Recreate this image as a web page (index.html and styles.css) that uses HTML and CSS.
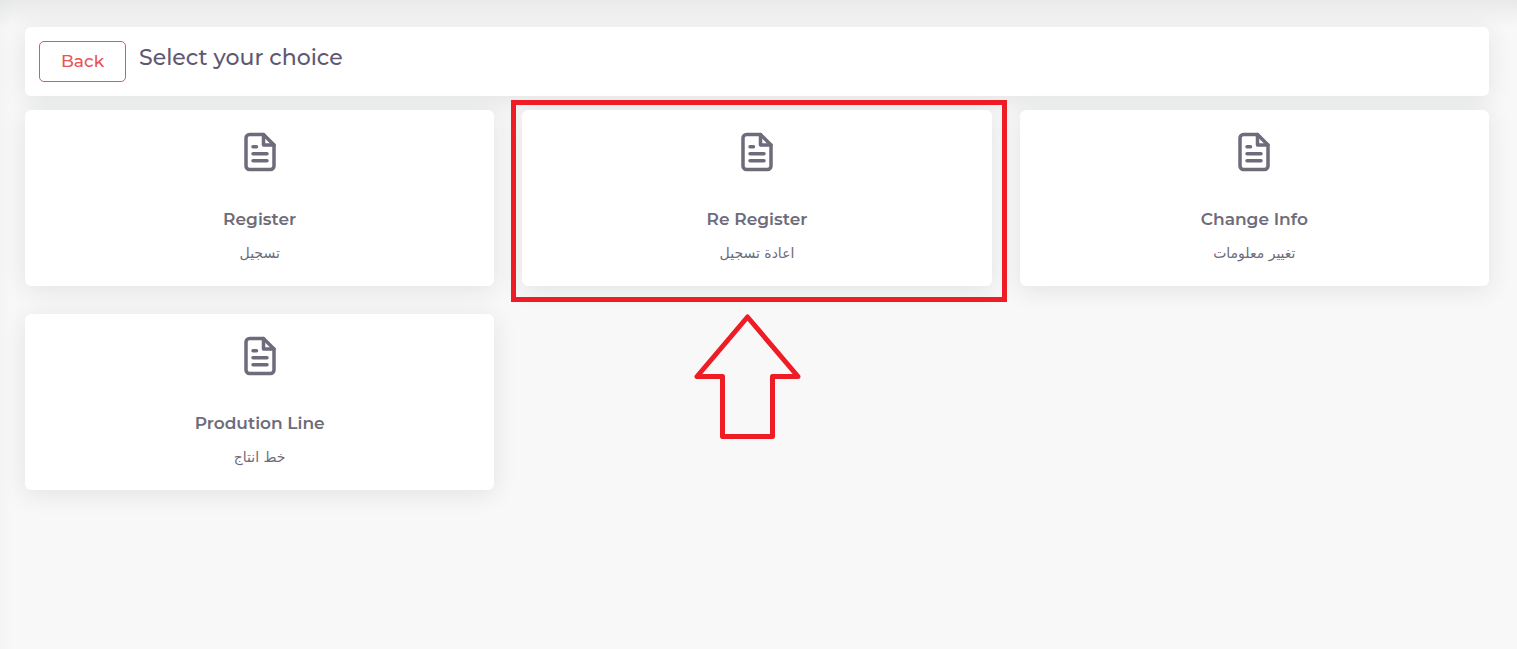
FILE: index.html
```html
<!DOCTYPE html>
<html lang="en">
<head>
<meta charset="utf-8">
<title>Select your choice</title>
<link rel="stylesheet" href="styles.css">
</head>
<body>
<svg class="sprite" aria-hidden="true">
  <symbol id="file-text" viewBox="0 0 24 24">
    <path d="M14 2H6a2 2 0 0 0-2 2v16a2 2 0 0 0 2 2h12a2 2 0 0 0 2-2V8z"/>
    <path d="M14 2v6h6M16 13H8M16 17H8M10 9H8"/>
  </symbol>
</svg>
<main class="page">
  <header class="card toolbar">
    <button class="back" type="button">Back</button>
    <h1 class="title">Select your choice</h1>
  </header>
  <section class="choices">
    <a class="card choice" href="#register">
      <svg class="icon" aria-hidden="true"><use href="#file-text"/></svg>
      <span class="label">Register</span>
      <span class="arabic" lang="ar" dir="rtl">تسجيل</span>
    </a>
    <div class="marked">
      <a class="card choice" href="#re-register">
        <svg class="icon" aria-hidden="true"><use href="#file-text"/></svg>
        <span class="label">Re Register</span>
        <span class="arabic" lang="ar" dir="rtl">اعادة تسجيل</span>
      </a>
      <span class="frame"></span>
      <svg class="arrow" viewBox="0 0 107 125" aria-hidden="true"><path d="M53.500 3L3 62.500H28.500V122.500H78.500V62.500H104z"/></svg>
    </div>
    <a class="card choice" href="#change-info">
      <svg class="icon" aria-hidden="true"><use href="#file-text"/></svg>
      <span class="label">Change Info</span>
      <span class="arabic" lang="ar" dir="rtl">تغيير معلومات</span>
    </a>
    <a class="card choice" href="#production-line">
      <svg class="icon" aria-hidden="true"><use href="#file-text"/></svg>
      <span class="label">Prodution Line</span>
      <span class="arabic" lang="ar" dir="rtl">خط انتاج</span>
    </a>
  </section>
</main>
</body>
</html>
```
FILE: styles.css
```css
* {
  box-sizing: border-box;
}

body {
  margin: 0;
  background: #f8f8f8;
  color: #6e6b7b;
  font-family: Montserrat, Inter, "DejaVu Sans", sans-serif;
}

.sprite {
  display: none;
}

.page {
  min-height: 100vh;
  padding: 27px 28px 28px 25px;
  background:
    linear-gradient(rgba(34, 41, 47, 0.07), rgba(34, 41, 47, 0)) top / 100% 28px no-repeat,
    linear-gradient(to right, rgba(34, 41, 47, 0.02), rgba(34, 41, 47, 0)) left / 12px 100% no-repeat;
}

.card {
  background: #fff;
  border-radius: 6px;
  box-shadow: 0 4px 24px rgba(34, 41, 47, 0.1);
}

.toolbar {
  display: flex;
  align-items: flex-start;
  gap: 13px;
  margin-bottom: 14px;
  padding: 14px;
}

.back {
  padding: 10px 21px;
  border: 1px solid #ea5455;
  border-radius: 5px;
  background: transparent;
  color: #ea5455;
  font-family: inherit;
  font-size: 17px;
  font-weight: 500;
  line-height: 19px;
}

.title {
  margin: 4px 0 0;
  color: #5e5873;
  font-size: 22px;
  font-weight: 500;
  line-height: 26px;
}

.choices {
  display: grid;
  grid-template-columns: repeat(3, 1fr);
  gap: 28px;
}

.choice {
  display: flex;
  flex-direction: column;
  align-items: center;
  padding: 21px;
  color: inherit;
  text-decoration: none;
}

.icon {
  width: 42px;
  height: 42px;
  margin-bottom: 35px;
  fill: none;
  stroke: currentColor;
  stroke-width: 2;
  stroke-linecap: round;
  stroke-linejoin: round;
}

.label {
  margin-bottom: 13px;
  font-size: 17px;
  font-weight: 600;
  line-height: 22px;
}

.arabic {
  margin-bottom: 1px;
  font-family: "DejaVu Sans", sans-serif;
  font-size: 14px;
  line-height: 21px;
}

.marked {
  position: relative;
}

.frame {
  position: absolute;
  inset: -10px -15px -16px -11px;
  border: 5px solid #ee1c25;
  pointer-events: none;
}

.arrow {
  position: absolute;
  top: 204px;
  left: calc(50% - 63px);
  width: 107px;
  height: 125px;
  fill: none;
  stroke: #ee1c25;
  stroke-width: 5;
  stroke-linejoin: round;
}
```
